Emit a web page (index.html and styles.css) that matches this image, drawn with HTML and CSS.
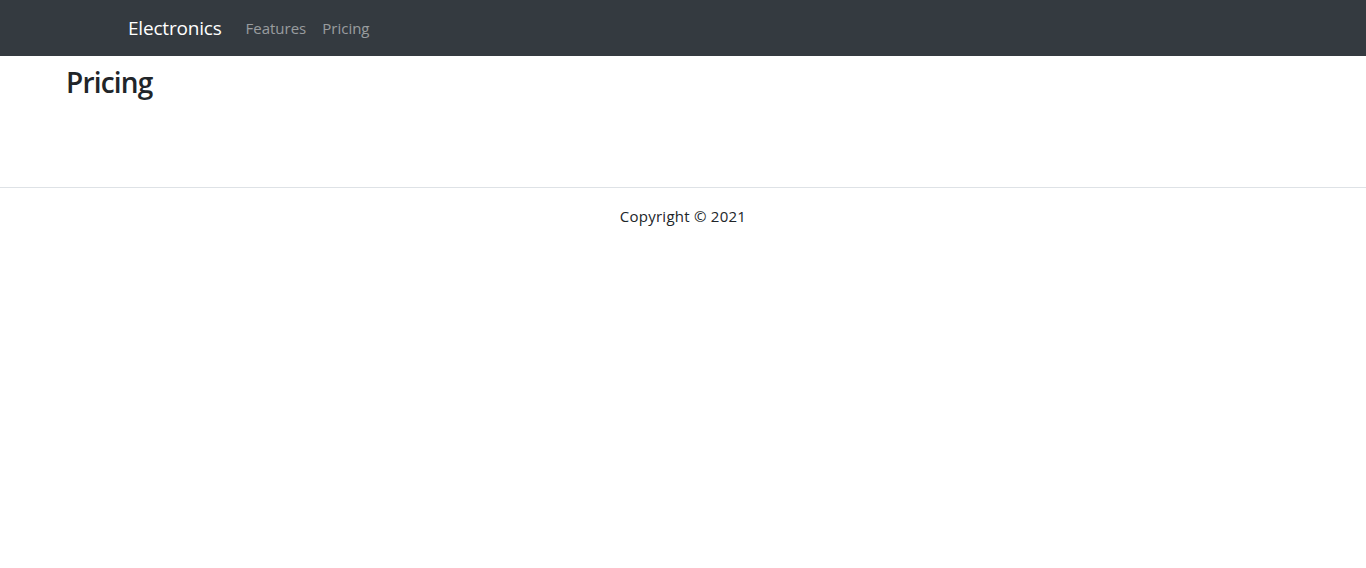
FILE: index.html
```html
<!DOCTYPE html>
<html lang="en">
<head>
<meta charset="utf-8">
<title>Electronics</title>
<link rel="stylesheet" href="styles.css">
</head>
<body>
<nav class="navbar">
  <div class="nav-container">
    <a class="brand" href="#">Electronics</a>
    <ul class="nav-links">
      <li><a href="#">Features</a></li>
      <li><a href="#">Pricing</a></li>
    </ul>
  </div>
</nav>
<main class="content">
  <h1 class="page-title">Pricing</h1>
</main>
<footer class="footer">
  <p>Copyright © 2021</p>
</footer>
</body>
</html>
```

FILE: styles.css
```css
* { box-sizing: border-box; }
body {
  margin: 0;
  font-family: "Open Sans", "Noto Sans", sans-serif;
  font-size: 16px;
  line-height: 1.5;
  color: #212529;
  background: #fff;
}
.navbar {
  background: #343a40;
  height: 56px;
  display: flex;
  align-items: center;
}
.nav-container {
  width: 1140px;
  margin: 0 auto;
  padding: 0 15px;
  display: flex;
  align-items: center;
}
.brand {
  color: #fff;
  text-decoration: none;
  font-size: 19px;
  letter-spacing: -0.2px;
  margin-right: 16px;
}
.nav-links {
  list-style: none;
  margin: 0;
  padding: 0;
  display: flex;
}
.nav-links a {
  display: block;
  padding: 8px 8px;
  color: rgba(255,255,255,0.5);
  text-decoration: none;
  font-size: 15px;
  letter-spacing: 0;
}
.content {
  height: 131px;
  padding: 10px 0 0 66px;
}
.page-title {
  margin: 0;
  font-size: 28px;
  font-weight: 550;
  line-height: 1.2;
  letter-spacing: -0.8px;
}
.footer {
  border-top: 1px solid #dee2e6;
  text-align: center;
  padding-top: 17px;
}
.footer p {
  margin: 0;
  font-size: 15px;
  letter-spacing: 0.25px;
}
```
